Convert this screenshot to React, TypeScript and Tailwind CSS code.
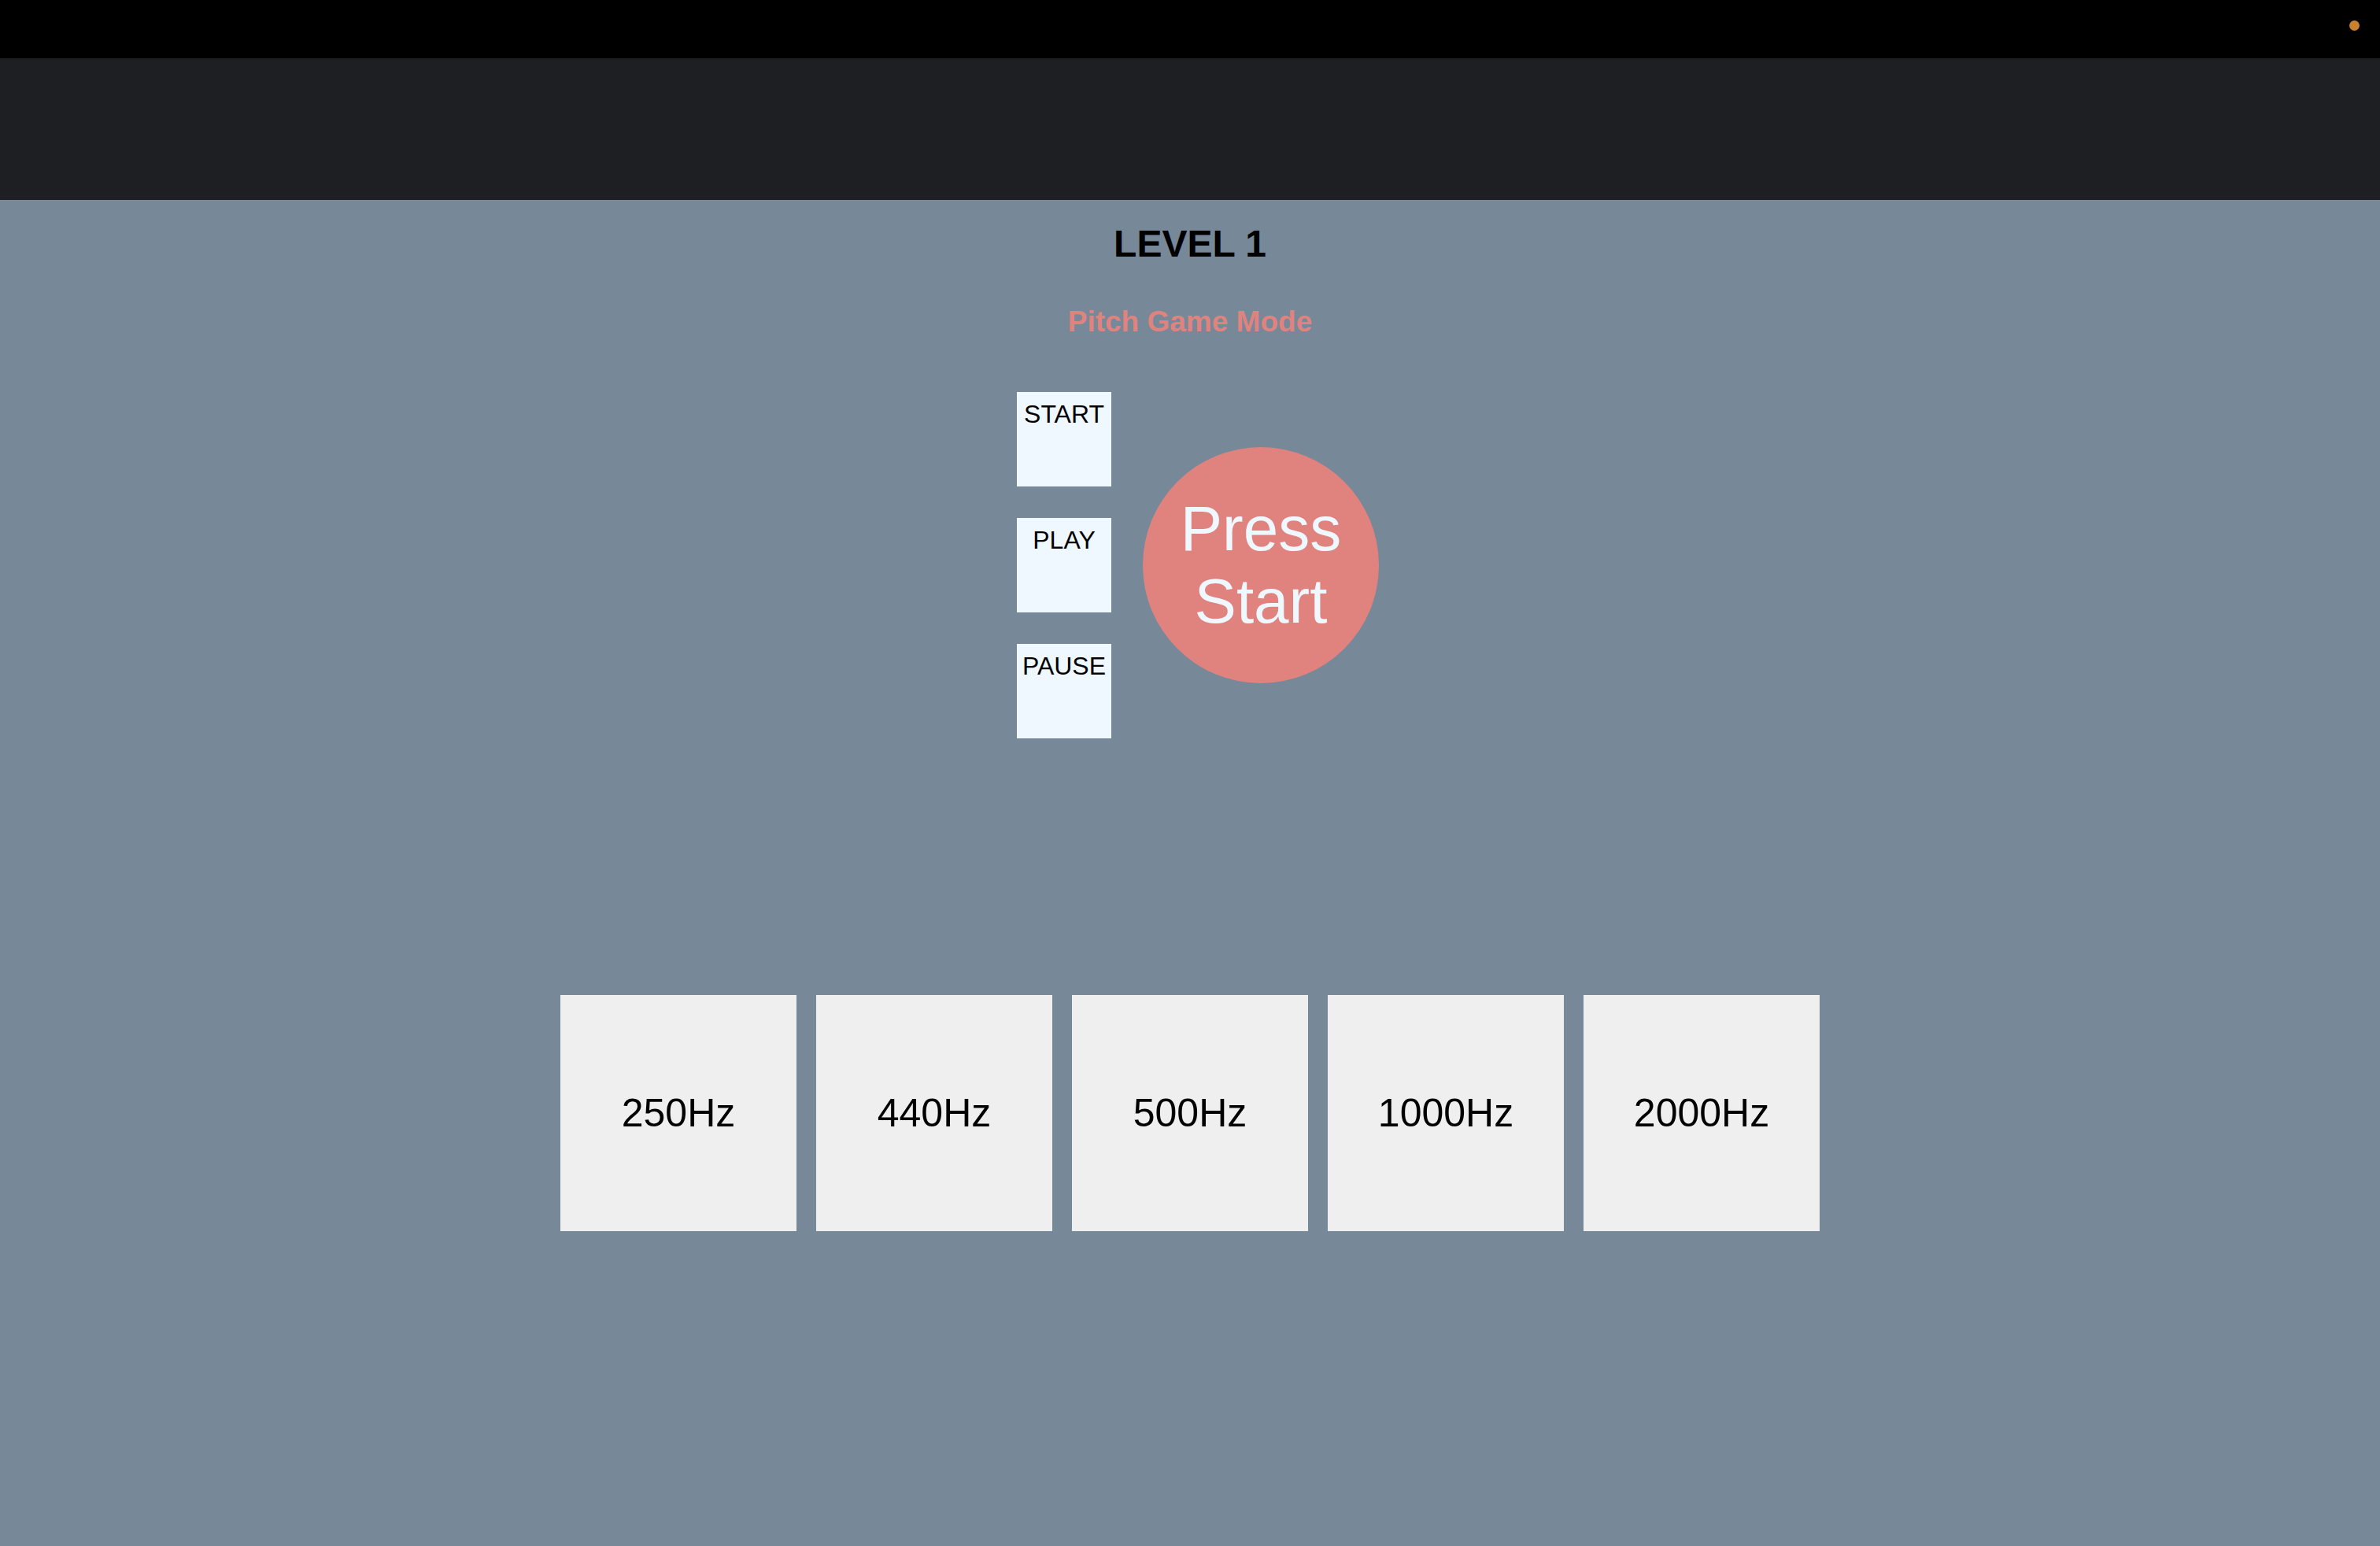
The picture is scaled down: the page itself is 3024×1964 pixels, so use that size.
const FREQUENCIES = ["250Hz", "440Hz", "500Hz", "1000Hz", "2000Hz"];
const CONTROLS = ["START", "PLAY", "PAUSE"];

const ControlButton = ({ label }: { label: string }) => {
  return (
    <div className="flex h-[120px] w-[120px] justify-center bg-[#f0f8ff] pt-[10px] text-[32px] leading-[37px] text-black">
      {label}
    </div>
  );
};

const FrequencyButton = ({ label }: { label: string }) => {
  return (
    <div className="flex h-[300px] w-[300px] items-center justify-center bg-[#efefef] text-[50px] leading-[58px] text-black">
      {label}
    </div>
  );
};

const App = () => {
  return (
    <div
      className="flex min-h-screen flex-col bg-[#778899]"
      style={{ fontFamily: '"Liberation Sans", Arial, sans-serif' }}
    >
      <div className="flex h-[74px] justify-end bg-black pt-[26px] pr-[26px]">
        <span className="block h-[13px] w-[13px] rounded-full bg-[#c8812f]" />
      </div>
      <div className="h-[180px] bg-[#1e1f22]" />

      <main className="flex flex-col items-center">
        <h2 className="pt-[28px] text-[48px] leading-[56px] font-bold text-black">
          LEVEL 1
        </h2>
        <h3 className="mt-[49px] text-[37px] leading-[44px] font-bold text-[#e0837f]">
          Pitch Game Mode
        </h3>

        <div className="mt-[67px] flex items-center gap-[40px] pl-[20px]">
          <div className="flex flex-col gap-[40px]">
            {CONTROLS.map((c) => (
              <ControlButton key={c} label={c} />
            ))}
          </div>
          <div className="flex h-[300px] w-[300px] flex-col items-center justify-center rounded-full bg-[#e0837f] text-center text-[80px] leading-[92px] text-[#f0f8ff]">
            <span>Press</span>
            <span>Start</span>
          </div>
        </div>

        <div className="mt-[326px] flex gap-[25px]">
          {FREQUENCIES.map((f) => (
            <FrequencyButton key={f} label={f} />
          ))}
        </div>
      </main>
    </div>
  );
};

export default App;
